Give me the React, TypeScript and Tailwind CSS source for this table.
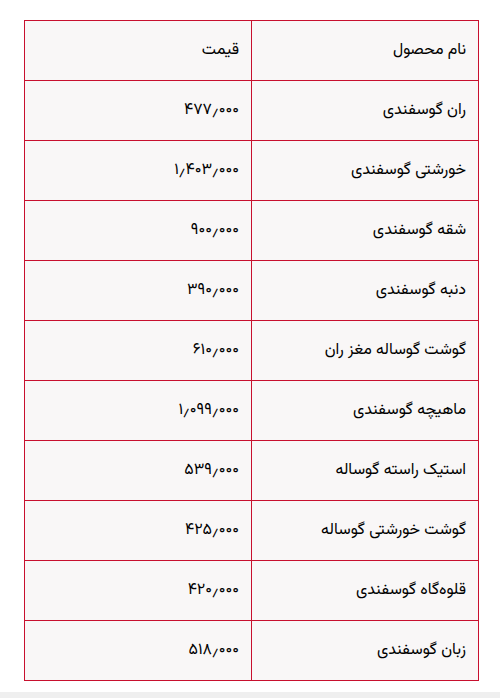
import React from "react";

const rows: [string, string][] = [
  ["ران گوسفندی", "۴۷۷٫۰۰۰"],
  ["خورشتی گوسفندی", "۱٫۴۰۳٫۰۰۰"],
  ["شقه گوسفندی", "۹۰۰٫۰۰۰"],
  ["دنبه گوسفندی", "۳۹۰٫۰۰۰"],
  ["گوشت گوساله مغز ران", "۶۱۰٫۰۰۰"],
  ["ماهیچه گوسفندی", "۱٫۰۹۹٫۰۰۰"],
  ["استیک راسته گوساله", "۵۳۹٫۰۰۰"],
  ["گوشت خورشتی گوساله", "۴۲۵٫۰۰۰"],
  ["قلوه‌گاه گوسفندی", "۴۲۰٫۰۰۰"],
  ["زبان گوسفندی", "۵۱۸٫۰۰۰"],
];

export default function App() {
  return (
    <div className="w-[500px] h-[698px] bg-white flex flex-col" style={{ fontFamily: 'Vazirmatn, "DejaVu Sans", sans-serif' }}>
      <div className="pt-[20px] pl-[24px] pr-[21px]">
        <table dir="rtl" className="w-[455px] border-collapse bg-[#f9f7f7] text-[16px] text-black table-fixed">
          <tbody>
            <tr className="h-[60px]">
              <td className="border border-[#c8102e] text-right pr-[12px] w-[227px]">نام محصول</td>
              <td className="border border-[#c8102e] text-right pr-[12px]">قیمت</td>
            </tr>
            {rows.map(([n, p]) => (
              <tr key={n} className="h-[60px]">
                <td className="border border-[#c8102e] text-right pr-[12px]">{n}</td>
                <td className="border border-[#c8102e] text-right pr-[12px]">{p}</td>
              </tr>
            ))}
          </tbody>
        </table>
      </div>
      <div className="mt-auto h-[6px] bg-[#efefef]" />
    </div>
  );
}
